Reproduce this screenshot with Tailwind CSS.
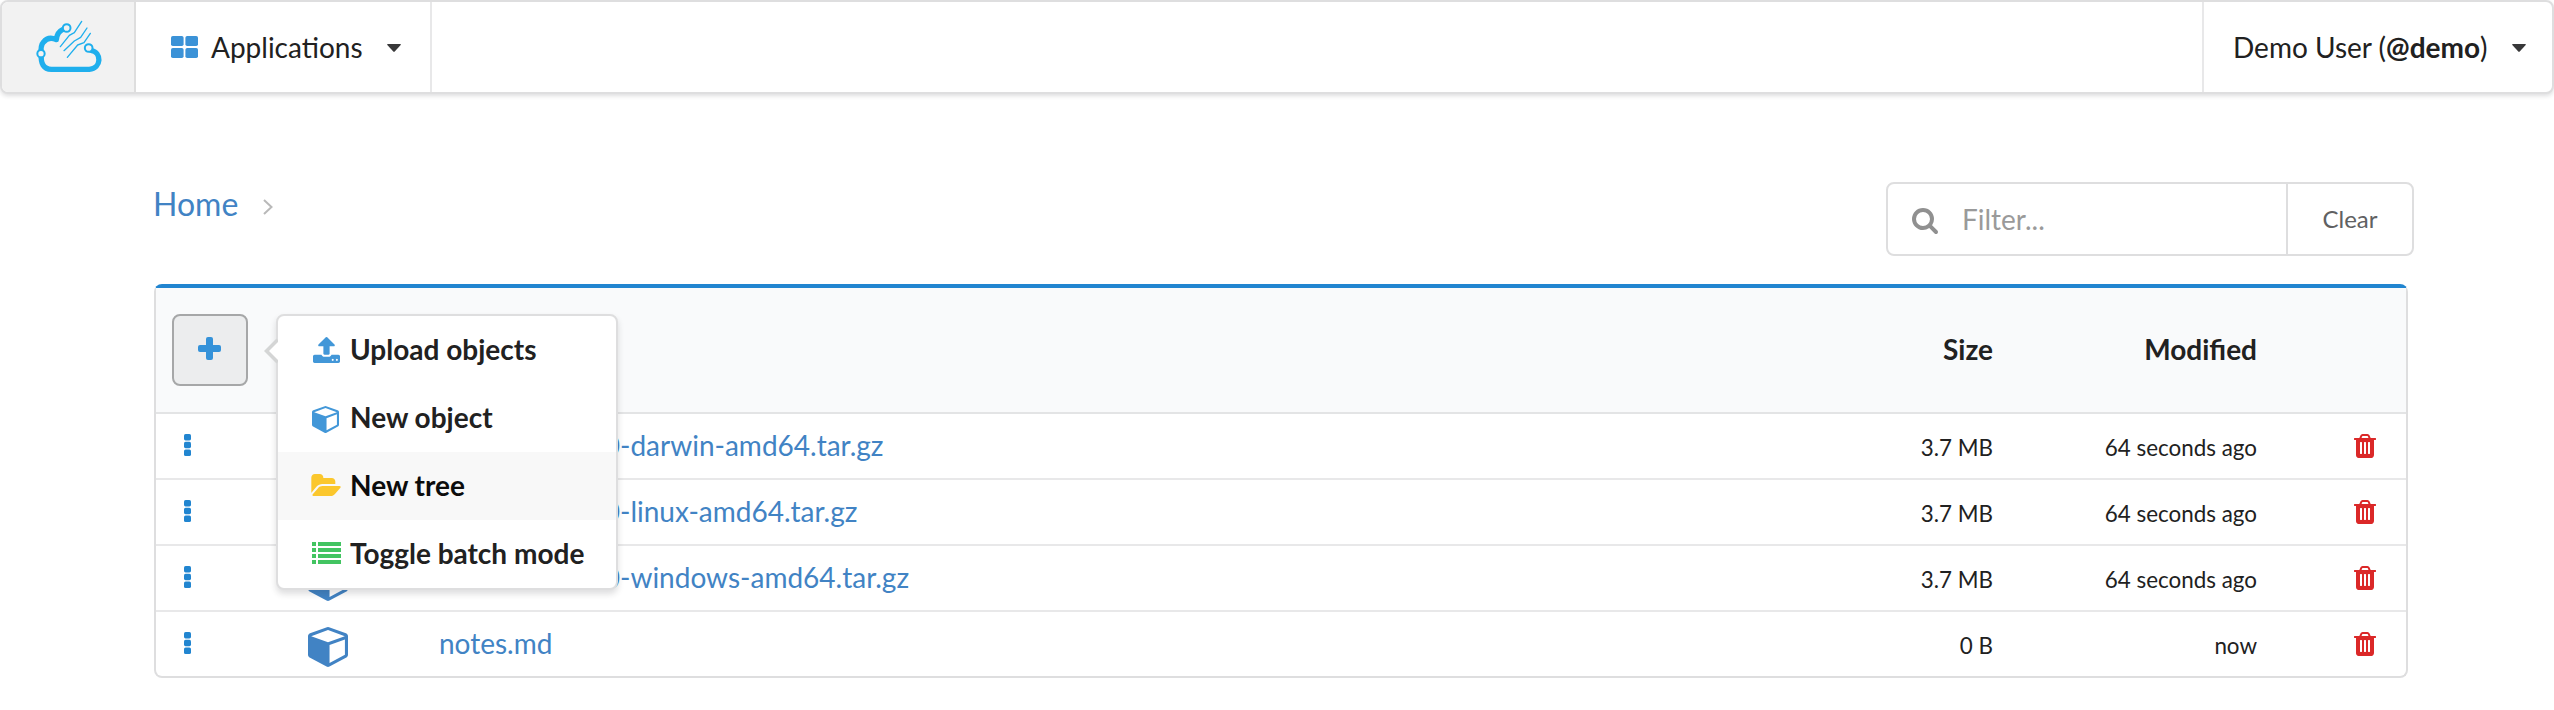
<!DOCTYPE html>
<html lang="en">
<head>
<meta charset="utf-8">
<title>Objects</title>
<script src="https://cdn.jsdelivr.net/npm/@tailwindcss/browser@4"></script>
</head>
<body class="min-h-screen overflow-hidden bg-white font-['Lato',sans-serif] text-[28px] leading-[34px] text-[#212121]">
<svg class="hidden">
  <symbol id="cube" viewBox="0 128 1664 1664"><path d="M896 1629l640-349v-636l-640 233v752zm-64-865l698-254-698-254-698 254zm832-252v768q0 35-18 65t-49 47l-704 384q-28 16-61 16t-61-16l-704-384q-31-17-49-47t-18-65v-768q0-40 23-73t61-47l704-256q22-8 44-8t44 8l704 256q38 14 61 47t23 73z"/></symbol>
  <symbol id="trash" viewBox="192 128 1408 1536"><path d="M704 1376v-704q0-14-9-23t-23-9h-64q-14 0-23 9t-9 23v704q0 14 9 23t23 9h64q14 0 23-9t9-23zm256 0v-704q0-14-9-23t-23-9h-64q-14 0-23 9t-9 23v704q0 14 9 23t23 9h64q14 0 23-9t9-23zm256 0v-704q0-14-9-23t-23-9h-64q-14 0-23 9t-9 23v704q0 14 9 23t23 9h64q14 0 23-9t9-23zm-544-992h448l-48-117q-7-9-17-11h-317q-10 2-17 11zm928 32v64q0 14-9 23t-23 9h-96v948q0 83-47 143.5t-113 60.5h-832q-66 0-113-58.5t-47-141.5v-952h-96q-14 0-23-9t-9-23v-64q0-14 9-23t23-9h309l70-167q15-37 54-63t79-26h320q40 0 79 26t54 63l70 167h309q14 0 23 9t9 23z"/></symbol>
  <symbol id="dots" viewBox="0 0 7 22"><rect width="7" height="6.4" rx="1.6"/><rect y="7.8" width="7" height="6.4" rx="1.6"/><rect y="15.6" width="7" height="6.4" rx="1.6"/></symbol>
  <symbol id="caret" viewBox="0 0 14 8"><path d="M.8 0h12.4q1 .3.5 1.1L7.7 7.600q-.7.6-1.400 0L.3 1.100Q-.2.300.8 0z"/></symbol>
</svg>

<header class="flex h-[94px] rounded-lg border-2 border-[#dededf] bg-white shadow-[0_2px_4px_0_rgba(34,36,38,0.15)]">
  <a class="flex w-[134px] items-center rounded-l-md border-r-2 border-[#dedede] bg-[#f2f2f2] pl-[18px]">
    <svg class="mb-1 h-[70px] w-[100px]" viewBox="0 0 300 210" fill="none" stroke="#1fafed" stroke-linecap="round" stroke-linejoin="round">
      <path stroke-width="16" d="M129 58Q111 66 109 89Q85 78 70 97Q61 107 64 131M64 131Q60 177 94 178H208C245 175 246 127 213 121"/>
      <g fill="#f2f2f2" stroke-width="6"><circle cx="140" cy="54" r="11.500"/><circle cx="206" cy="114" r="11.500"/><circle cx="63" cy="131" r="11"/></g>
      <path stroke-width="4" d="M185 34L163 68L148 76L121 110M201 54L182 82L163 93L132 122M211 70L192 98L173 105L142 142"/>
    </svg>
  </a>
  <a class="flex w-[296px] items-center border-r-2 border-[#e8e8e9] pl-[35px]">
    <svg class="h-[22px] w-[27px]" viewBox="0 0 27 22" fill="#3b92d7"><rect width="12.600" height="10" rx="1.800"/><rect x="14.400" width="12.600" height="10" rx="1.800"/><rect y="12" width="12.600" height="10" rx="1.800"/><rect x="14.400" y="12" width="12.600" height="10" rx="1.800"/></svg>
    <span class="ml-[13px] w-[152px] whitespace-nowrap">Applications</span>
    <svg class="ml-6 mt-0.5 h-2 w-3.5" fill="#383839"><use href="#caret"/></svg>
  </a>
  <a class="ml-auto flex w-[350px] items-center border-l-2 border-[#e8e8e9] pl-[29px]">
    <span class="w-[256px] whitespace-nowrap">Demo User (<b>@demo</b>)</span>
    <svg class="ml-[23px] mt-0.5 h-2 w-3.5" fill="#383839"><use href="#caret"/></svg>
  </a>
</header>

<main class="pl-[154px] pr-[140px]">
  <div class="flex justify-between pt-[88px]">
    <nav class="-ml-px flex h-[44px] items-center text-[32px] text-[#4183c4]">
      <a>Home</a>
      <svg class="ml-[25px] mt-1.5 h-4 w-[10px]" viewBox="0 0 10 16" fill="none" stroke="#b9b9b9" stroke-width="2"><path d="M1 1l7.500 7L1 15"/></svg>
    </nav>
    <div class="flex h-[74px] w-[528px] rounded-lg border-2 border-[#dededf]">
      <div class="flex w-[400px] items-center border-r-2 border-[#dededf] pl-6">
        <svg class="mt-1 h-[26px] w-[26px]" viewBox="64 128 1664 1664" fill="#909090"><path d="M1216 832q0-185-131.500-316.500t-316.500-131.500-316.500 131.500-131.500 316.500 131.500 316.500 316.500 131.500 316.500-131.500 131.500-316.500zm512 832q0 52-38 90t-90 38q-54 0-90-38l-343-342q-179 124-399 124-143 0-273.500-55.500t-225-150-150-225-55.500-273.500 55.500-273.500 150-225 225-150 273.500-55.500 273.500 55.500 225 150 150 225 55.500 273.500q0 220-124 399l343 343q37 37 37 90z"/></svg>
        <span class="ml-6 text-[#9a9a9a]">Filter...</span>
      </div>
      <button class="flex-1 text-2xl text-[#606162]">Clear</button>
    </div>
  </div>

  <section class="mt-7 h-[394px] w-[2254px] rounded-lg border-2 border-[#dededf] border-t-4 border-t-[#2185d0]">
    <div class="flex h-[126px] border-b-2 border-[#e3e4e5] bg-[#f9fafb] pt-[26px]">
      <div class="relative ml-4 h-[72px] w-[76px]">
        <button class="flex h-full w-full items-center justify-center rounded-lg border-2 border-[#a6a7a8] bg-[#ecedee]">
          <svg class="mb-[3px] mr-px h-[23px] w-[23px]" viewBox="0 0 23 23" fill="#3592d9"><rect x="8" width="7" height="23" rx="2"/><rect y="8" width="23" height="7" rx="2"/></svg>
        </button>
        <div class="absolute left-[104px] top-0 z-10 w-[342px] rounded-lg border-2 border-[#dededf] bg-white font-bold shadow-[0_4px_6px_0_rgba(34,36,38,0.15)]">
          <svg class="absolute -left-[14px] top-[22px] h-[26px] w-[26px]" viewBox="0 0 26 26"><path fill="#d4d5d5" d="M0 13L12.500.500L14 2V24L12.500 25.500z"/><path fill="#fff" d="M5 13L15 3L25 13L15 23z"/></svg>
          <div class="flex h-[68px] items-center pb-0.5">
            <svg class="ml-[35px] mt-0.5 h-[26px] w-[27px]" viewBox="64 64 1664 1600" fill="#4297d8"><path d="M1344 1472q0-26-19-45t-45-19-45 19-19 45 19 45 45 19 45-19 19-45zm256 0q0-26-19-45t-45-19-45 19-19 45 19 45 45 19 45-19 19-45zm128-224v320q0 40-28 68t-68 28h-1472q-40 0-68-28t-28-68v-320q0-40 28-68t68-28h427q21 56 70.500 92t110.500 36h256q61 0 110.500-36t70.500-92h427q40 0 68 28t28 68zm-325-648q-17 40-59 40h-256v448q0 26-19 45t-45 19h-256q-26 0-45-19t-19-45v-448h-256q-42 0-59-40-17-39 14-69l448-448q18-19 45-19t45 19l448 448q31 30 14 69z"/></svg>
            <span class="ml-2.5">Upload objects</span>
          </div>
          <div class="flex h-[68px] items-center pb-0.5">
            <svg class="ml-[34px] mt-1 h-[27px] w-[27px]" fill="#4297d8"><use href="#cube"/></svg>
            <span class="ml-[11px]">New object</span>
          </div>
          <div class="flex h-[68px] items-center bg-[#f8f8f8] pb-0.5 text-[#0c0c0c]">
            <svg class="ml-[33px] h-[22px] w-[30px]" viewBox="0 128 1880 1408" fill="#fbc72d"><path d="M1879 952q0 31-31 66l-336 396q-43 51-120.500 86.500t-143.500 35.500h-1088q-34 0-60.500-13t-26.500-43q0-31 31-66l336-396q43-51 120.500-86.500t143.500-35.500h1088q34 0 60.500 13t26.500 43zm-343-344v160h-832q-94 0-197 47.500t-164 119.500l-337 396-5 6q0-4-.5-12.500t-.5-12.500v-960q0-92 66-158t158-66h320q92 0 158 66t66 158v32h544q92 0 158 66t66 158z"/></svg>
            <span class="ml-[9px]">New tree</span>
          </div>
          <div class="flex h-[68px] items-center pb-0.5">
            <svg class="ml-[34px] h-[22px] w-[29px]" viewBox="0 0 29 22" fill="#42c461"><path d="M0 0h4v4H0zM6 0h23v4H6zM0 6h4v4H0zM6 6h23v4H6zM0 12h4v4H0zM6 12h23v4H6zM0 18h4v4H0zM6 18h23v4H6z"/></svg>
            <span class="ml-[9px]">Toggle batch mode</span>
          </div>
        </div>
      </div>
      <div class="ml-auto flex h-[70px] items-center pr-[149px] font-bold">
        <span>Size</span><span class="w-[264px] text-right">Modified</span>
      </div>
    </div>

    <div class="flex h-[66px] items-center border-b-2 border-[#e8e8e9] pb-0.5">
      <svg class="ml-7 h-[22px] w-[7px]" fill="#2185d0"><use href="#dots"/></svg>
      <svg class="ml-[117px] mt-2 h-10 w-10" fill="#4183c4"><use href="#cube"/></svg>
      <a class="ml-[92px] flex text-[#4183c4]"><span class="w-[180px] text-right">0</span>-darwin-amd64.tar.gz</a>
      <span class="ml-auto mt-[5px] text-[22.4px]">3.7 MB</span><span class="mt-[5px] w-[264px] text-right text-[22.4px]">64 seconds ago</span>
      <svg class="ml-24 mr-[29px] mt-0.5 h-6 w-6" fill="#db2828"><use href="#trash"/></svg>
    </div>
    <div class="flex h-[66px] items-center border-b-2 border-[#e8e8e9] pb-0.5">
      <svg class="ml-7 h-[22px] w-[7px]" fill="#2185d0"><use href="#dots"/></svg>
      <svg class="ml-[117px] mt-2 h-10 w-10" fill="#4183c4"><use href="#cube"/></svg>
      <a class="ml-[92px] flex text-[#4183c4]"><span class="w-[180px] text-right">0</span>-linux-amd64.tar.gz</a>
      <span class="ml-auto mt-[5px] text-[22.4px]">3.7 MB</span><span class="mt-[5px] w-[264px] text-right text-[22.4px]">64 seconds ago</span>
      <svg class="ml-24 mr-[29px] mt-0.5 h-6 w-6" fill="#db2828"><use href="#trash"/></svg>
    </div>
    <div class="flex h-[66px] items-center border-b-2 border-[#e8e8e9] pb-0.5">
      <svg class="ml-7 h-[22px] w-[7px]" fill="#2185d0"><use href="#dots"/></svg>
      <svg class="ml-[117px] mt-2 h-10 w-10" fill="#4183c4"><use href="#cube"/></svg>
      <a class="ml-[92px] flex text-[#4183c4]"><span class="w-[180px] text-right">0</span>-windows-amd64.tar.gz</a>
      <span class="ml-auto mt-[5px] text-[22.4px]">3.7 MB</span><span class="mt-[5px] w-[264px] text-right text-[22.4px]">64 seconds ago</span>
      <svg class="ml-24 mr-[29px] mt-0.5 h-6 w-6" fill="#db2828"><use href="#trash"/></svg>
    </div>
    <div class="flex h-16 items-center pb-0.5">
      <svg class="ml-7 h-[22px] w-[7px]" fill="#2185d0"><use href="#dots"/></svg>
      <svg class="ml-[117px] mt-2 h-10 w-10" fill="#4183c4"><use href="#cube"/></svg>
      <a class="ml-[91px] text-[#4183c4]">notes.md</a>
      <span class="ml-auto mt-[5px] text-[22.4px]">0 B</span><span class="mt-[5px] w-[264px] text-right text-[22.4px]">now</span>
      <svg class="ml-24 mr-[29px] mt-0.5 h-6 w-6" fill="#db2828"><use href="#trash"/></svg>
    </div>
  </section>
</main>
</body>
</html>
